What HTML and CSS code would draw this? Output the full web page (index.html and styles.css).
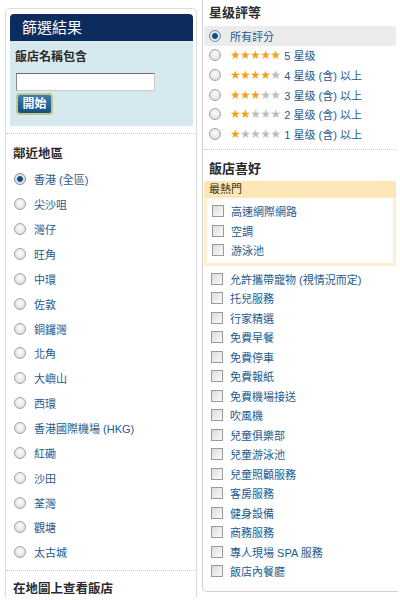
FILE: index.html
```html
<!DOCTYPE html>
<html lang="zh-Hant">
<head>
<meta charset="utf-8">
<link rel="stylesheet" href="styles.css">
</head>
<body>
<div class="page">
  <div class="left">
    <div class="top">
      <div class="hdr">篩選結果</div>
      <div class="search">
        <div class="label">飯店名稱包含</div>
        <div class="input"></div>
        <div class="btn">開始</div>
      </div>
    </div>
    <div class="sep"></div>
    <div class="h">鄰近地區</div>
    <ul class="areas">
      <li><span class="radio on"></span>香港 (全區)</li>
      <li><span class="radio"></span>尖沙咀</li>
      <li><span class="radio"></span>灣仔</li>
      <li><span class="radio"></span>旺角</li>
      <li><span class="radio"></span>中環</li>
      <li><span class="radio"></span>佐敦</li>
      <li><span class="radio"></span>銅鑼灣</li>
      <li><span class="radio"></span>北角</li>
      <li><span class="radio"></span>大嶼山</li>
      <li><span class="radio"></span>西環</li>
      <li><span class="radio"></span>香港國際機場 (HKG)</li>
      <li><span class="radio"></span>紅磡</li>
      <li><span class="radio"></span>沙田</li>
      <li><span class="radio"></span>荃灣</li>
      <li><span class="radio"></span>觀塘</li>
      <li><span class="radio"></span>太古城</li>
    </ul>
    <div class="sep sep2"></div>
    <div class="h map">在地圖上查看飯店</div>
  </div>

  <div class="right">
    <div class="h rh">星级評等</div>
    <ul class="ratings">
      <li class="sel"><span class="radio on"></span>所有評分</li>
      <li><span class="radio"></span><span class="stars">★★★★★</span>5 星级</li>
      <li><span class="radio"></span><span class="stars">★★★★<i>★</i></span>4 星级 (含) 以上</li>
      <li><span class="radio"></span><span class="stars">★★★<i>★★</i></span>3 星级 (含) 以上</li>
      <li><span class="radio"></span><span class="stars">★★<i>★★★</i></span>2 星级 (含) 以上</li>
      <li><span class="radio"></span><span class="stars">★<i>★★★★</i></span>1 星级 (含) 以上</li>
    </ul>
    <div class="sep rsep"></div>
    <div class="h rh2">飯店喜好</div>
    <div class="popbar">最熱門</div>
    <ul class="checks popbox">
      <li><span class="cb"></span>高速網際網路</li>
      <li><span class="cb"></span>空調</li>
      <li><span class="cb"></span>游泳池</li>
    </ul>
    <ul class="checks more">
      <li><span class="cb"></span>允許攜帶寵物 (視情況而定)</li>
      <li><span class="cb"></span>托兒服務</li>
      <li><span class="cb"></span>行家精選</li>
      <li><span class="cb"></span>免費早餐</li>
      <li><span class="cb"></span>免費停車</li>
      <li><span class="cb"></span>免費報紙</li>
      <li><span class="cb"></span>免費機場接送</li>
      <li><span class="cb"></span>吹風機</li>
      <li><span class="cb"></span>兒童俱樂部</li>
      <li><span class="cb"></span>兒童游泳池</li>
      <li><span class="cb"></span>兒童照顧服務</li>
      <li><span class="cb"></span>客房服務</li>
      <li><span class="cb"></span>健身設備</li>
      <li><span class="cb"></span>商務服務</li>
      <li><span class="cb"></span>專人現場 SPA 服務</li>
      <li><span class="cb"></span>飯店內餐廳</li>
    </ul>
  </div>
</div>
</body>
</html>
```

FILE: styles.css
```css
html, body {
  margin: 0;
  padding: 0;
  background: #fff;
}
body {
  font-family: "Liberation Sans", "Noto Sans CJK TC", sans-serif;
  font-size: 11px;
  color: #1d5b8f;
}
ul {
  list-style: none;
  margin: 0;
  padding: 0;
}
.page {
  display: flex;
  align-items: flex-start;
  gap: 5px;
  padding-left: 5px;
  height: 600px;
  overflow: hidden;
}

/* left column */
.left {
  width: 192px;
  box-sizing: border-box;
  margin-top: 8px;
  border: 1px solid #dcdcdc;
  border-bottom: none;
  border-radius: 5px 5px 0 0;
}
.top {
  padding: 5px 3px 0 4px;
}
.hdr {
  background: #0b2c5d;
  color: #fff;
  height: 27px;
  line-height: 27px;
  font-size: 15px;
  padding-left: 12px;
  border-radius: 4px 4px 0 0;
}
.search {
  background: #d6e9ef;
  padding: 8px 5px 11px 5px;
  display: flex;
  flex-direction: column;
  align-items: flex-start;
}
.label {
  font-size: 12px;
  line-height: 16px;
  font-weight: bold;
  color: #2a2a2a;
}
.input {
  margin-top: 8px;
  margin-left: 1px;
  width: 139px;
  height: 18px;
  box-sizing: border-box;
  background: #fff;
  border: 1px solid #c9c9c9;
  border-top-color: #6e6e6e;
  border-left-color: #8a8a8a;
}
.btn {
  margin-top: 2px;
  margin-left: 1px;
  width: 37px;
  height: 22px;
  box-sizing: border-box;
  border: 2px solid #c3c48e;
  border-radius: 4px;
  background: linear-gradient(#3b7fae, #12507f);
  color: #fff;
  font-weight: bold;
  font-size: 12px;
  line-height: 18px;
  text-align: center;
}
.sep {
  border-top: 1px dotted #c8c8c8;
  margin-top: 7px;
}
.h {
  font-size: 12.5px;
  font-weight: bold;
  color: #2a2a2a;
  line-height: 18px;
}
.left .h {
  padding: 11px 0 0 7px;
}
.areas {
  margin-top: 4px;
  padding-left: 8px;
}
.areas li {
  height: 24.87px;
  display: flex;
  align-items: center;
}
.areas .radio {
  margin-right: 8px;
}
.sep2 {
  margin-top: 5px;
}
.left .map {
  padding-top: 9px;
}

/* radios & checkboxes */
.radio {
  width: 12px;
  height: 12px;
  box-sizing: border-box;
  border-radius: 50%;
  border: 1px solid #a4a4a4;
  background: radial-gradient(circle at 50% 40%, #fdfdfd 0, #e6e6e6 60%, #cfcfcf 100%);
  flex: none;
}
.radio.on {
  border-color: #7d8c9a;
  background: radial-gradient(circle, #0d3f6b 0, #1c5b8e 2.6px, #d8e3ec 3.3px, #eef2f5 100%);
}
.cb {
  width: 12px;
  height: 12px;
  box-sizing: border-box;
  border: 1px solid #9a9a9a;
  background: linear-gradient(135deg, #dcdcdc, #fafafa);
  flex: none;
}

/* right column */
.right {
  width: 196px;
  box-sizing: border-box;
  border-left: 1px solid #d0d0d0;
  border-bottom: 1px solid #d0d0d0;
  border-bottom-left-radius: 5px;
  padding-bottom: 10px;
}
.rh {
  padding: 4px 0 0 6px;
  font-size: 13px;
}
.ratings {
  margin: 4px 2px 0 1px;
}
.ratings li {
  height: 19.6px;
  display: flex;
  align-items: center;
  padding-left: 5px;
}
.ratings li.sel {
  background: #ececec;
}
.ratings .radio {
  margin-right: 9px;
}
.stars {
  font-family: "DejaVu Sans", sans-serif;
  font-size: 12px;
  color: #f5a01a;
  letter-spacing: -0.7px;
  margin-right: 4px;
}
.stars i {
  font-style: normal;
  color: #bdbdbd;
}
.rsep {
  margin: 5px 2px 0 1px;
}
.rh2 {
  padding: 10px 0 0 6px;
  font-size: 13px;
}
.popbar {
  margin: 3px 2px 0 1px;
  background: #fbe8b6;
  height: 17px;
  line-height: 17px;
  padding-left: 5px;
  color: #3a3020;
  font-size: 11px;
}
.checks li {
  height: 19.5px;
  display: flex;
  align-items: center;
}
.checks .cb {
  margin-right: 7px;
}
.popbox {
  margin: 0 2px 0 1px;
  border: 3px solid #fdf0cc;
  border-top: none;
  padding: 4px 0 3px 5px;
}
.more {
  margin-top: 3px;
  padding-left: 8px;
}
```
